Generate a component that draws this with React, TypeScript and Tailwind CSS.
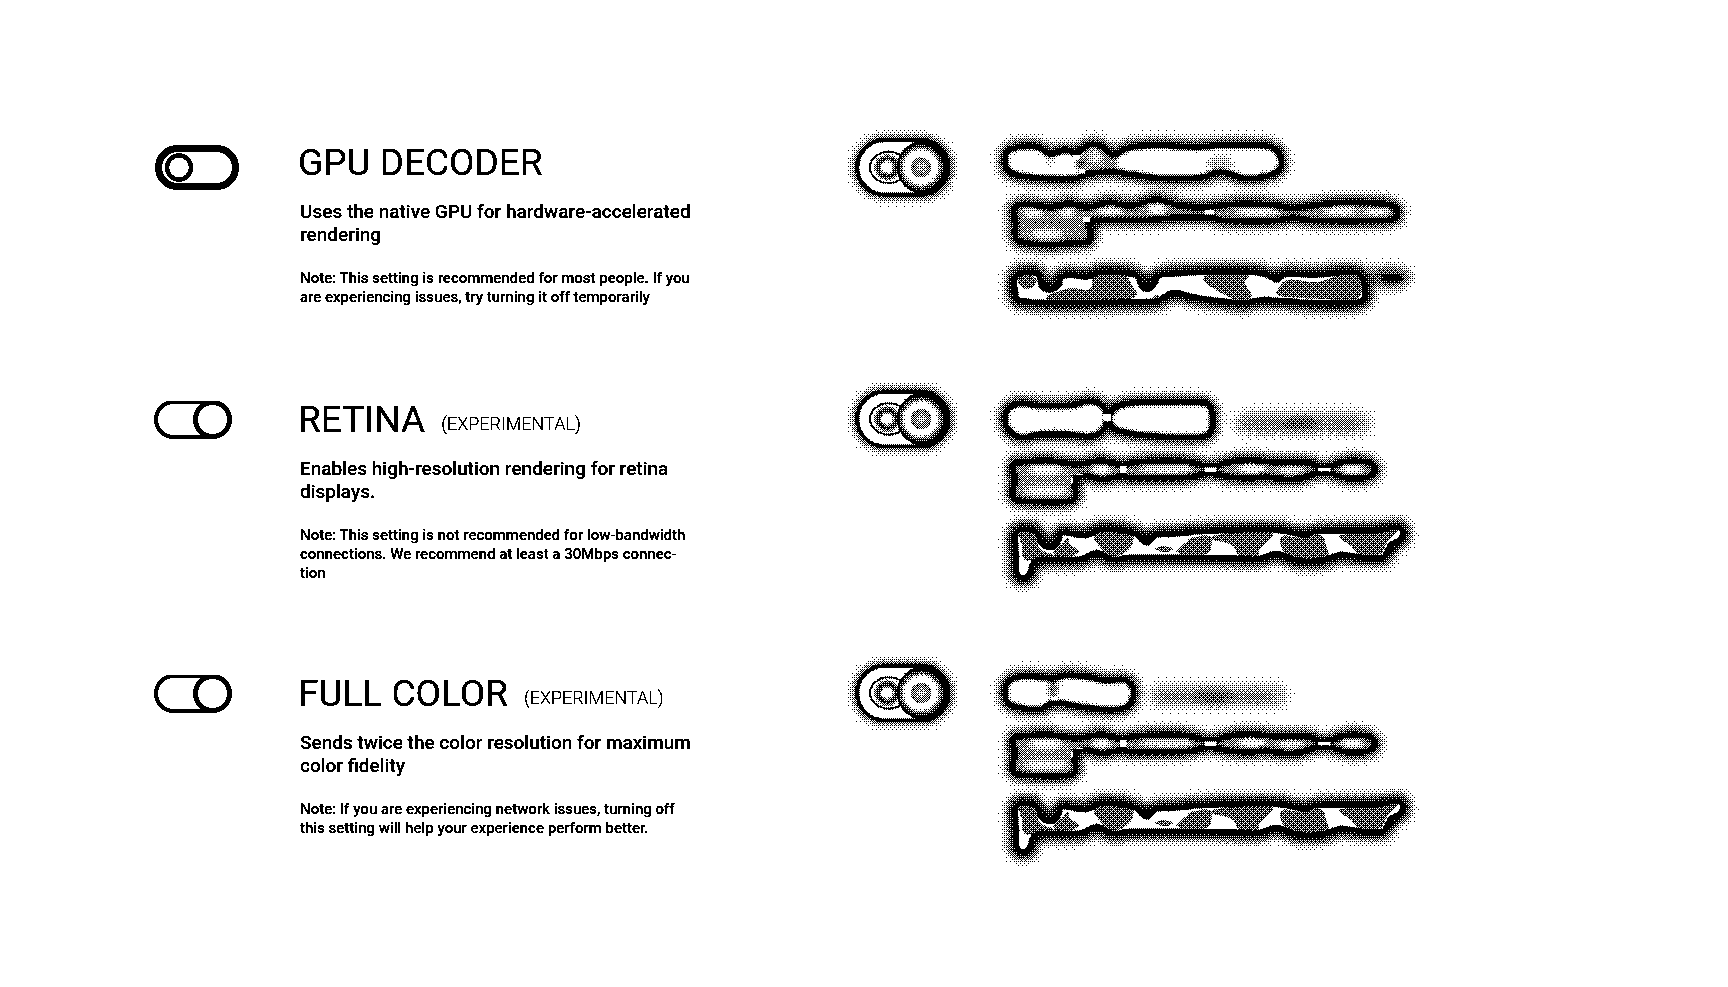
import { useId, useState } from "react";
import type { ReactNode } from "react";

type Pt = [number, number];

/* Ordered 8x8 threshold matrix used for the one-bit rendering. */
const bayer = (x: number, y: number): number => {
  let v = 0;
  for (let bit = 0; bit < 3; bit++) {
    const bx = (x >> bit) & 1;
    const by = (y >> bit) & 1;
    v = v * 4 + ((bx ^ by) * 2 + by);
  }
  return v;
};

const cells = Array.from({ length: 64 }, (_, i) => {
  const x = i % 8;
  const y = Math.floor(i / 8);
  const level = Math.round(((bayer(x, y) + 0.5) / 64) * 255);
  return { x, y, fill: `rgb(${level},${level},${level})` };
});

/* Closed Catmull-Rom curve through the points. */
const smooth = (p: Pt[]): string => {
  const n = p.length;
  let d = `M${p[0][0]} ${p[0][1]}`;
  for (let i = 0; i < n; i++) {
    const a = p[(i + n - 1) % n];
    const b = p[i];
    const c = p[(i + 1) % n];
    const e = p[(i + 2) % n];
    d += `C${b[0] + (c[0] - a[0]) / 6} ${b[1] + (c[1] - a[1]) / 6} ${c[0] - (e[0] - b[0]) / 6} ${c[1] - (e[1] - b[1]) / 6} ${c[0]} ${c[1]}`;
  }
  return d + "Z";
};

function Dithered({ width, height, children }: { width: number; height: number; children: ReactNode }) {
  const id = useId();
  return (
    <svg width={width} height={height} viewBox={`0 0 ${width} ${height}`} aria-hidden="true" className="block shrink-0">
      <defs>
        <pattern id={`${id}m`} width="8" height="8" patternUnits="userSpaceOnUse">
          {cells.map((c) => (
            <rect key={`${c.x}-${c.y}`} x={c.x} y={c.y} width="1" height="1" fill={c.fill} shapeRendering="crispEdges" />
          ))}
        </pattern>
        <filter id={`${id}t`} x="0" y="0" width={width} height={height} filterUnits="userSpaceOnUse" colorInterpolationFilters="sRGB">
          <feComponentTransfer>
            <feFuncR type="discrete" tableValues="0 1" />
            <feFuncG type="discrete" tableValues="0 1" />
            <feFuncB type="discrete" tableValues="0 1" />
          </feComponentTransfer>
        </filter>
      </defs>
      <g filter={`url(#${id}t)`}>
        <rect width={width} height={height} fill="#fff" />
        {children}
        <rect width={width} height={height} fill={`url(#${id}m)`} opacity="0.5" />
      </g>
    </svg>
  );
}

function SharedFilters() {
  return (
    <svg width="0" height="0" aria-hidden="true" className="absolute">
      <defs>
        <filter id="halo" x="-20%" y="-80%" width="140%" height="260%" colorInterpolationFilters="sRGB">
          <feGaussianBlur stdDeviation="13" />
        </filter>
        <filter id="soft" x="-20%" y="-40%" width="140%" height="180%" colorInterpolationFilters="sRGB">
          <feGaussianBlur stdDeviation="5" />
        </filter>
        <filter id="glow" x="-60%" y="-100%" width="220%" height="300%" colorInterpolationFilters="sRGB">
          <feGaussianBlur stdDeviation="8" />
        </filter>
        <filter id="onebit" x="0" y="0" width="100%" height="100%" colorInterpolationFilters="sRGB">
          <feComponentTransfer>
            <feFuncA type="discrete" tableValues="0 1 1" />
          </feComponentTransfer>
        </filter>
      </defs>
    </svg>
  );
}

interface Spot {
  x: number;
  y: number;
  rx: number;
  ry: number;
  fill: string;
}

interface Shape {
  points: Pt[];
  fill: string;
  spots?: Spot[];
  patches?: Pt[][];
  gaps?: Spot[];
}

const spot = (x: number, y: number, rx: number, ry: number, fill: string): Spot => ({ x, y, rx, ry, fill });

function ShapeBody({ shape }: { shape: Shape }) {
  const id = useId();
  const d = smooth(shape.points);
  return (
    <g>
      <clipPath id={id}>
        <path d={d} />
      </clipPath>
      <g clipPath={`url(#${id})`}>
        <path d={d} fill={shape.fill} />
        {shape.spots?.map((s, i) => (
          <ellipse key={i} cx={s.x} cy={s.y} rx={s.rx} ry={s.ry} fill={s.fill} filter="url(#glow)" />
        ))}
        {shape.patches?.map((p, i) => (
          <path key={i} d={smooth(p)} fill="#585858" />
        ))}
        <path d={d} fill="none" stroke="#000" strokeWidth="20" filter="url(#soft)" opacity={shape.patches ? 0 : 0.85} />
      </g>
      <path d={d} fill="none" stroke="#000" strokeWidth="16" strokeLinejoin="round" />
      {shape.gaps?.map((s, i) => (
        <rect key={i} x={s.x - s.rx} y={s.y - s.ry} width={s.rx * 2} height={s.ry * 2} fill={s.fill} />
      ))}
    </g>
  );
}

interface Ghost {
  height: number;
  top: number;
  knobY: number;
  shapes: Shape[];
  smear?: [number, number];
  tail?: boolean;
}

function GhostText({ ghost }: { ghost: Ghost }) {
  return (
    <Dithered width={440} height={ghost.height}>
      <g transform={`scale(0.333333) translate(-450 ${-ghost.top})`}>
        {ghost.smear && (
          <g filter="url(#halo)">
            <rect x={ghost.smear[0]} y={ghost.smear[1] - 38} width="418" height="72" rx="36" fill="#b0b0b0" />
            <ellipse cx={ghost.smear[0] + 90} cy={ghost.smear[1]} rx="66" ry="20" fill="#808080" />
            <ellipse cx={ghost.smear[0] + 200} cy={ghost.smear[1]} rx="66" ry="20" fill="#484848" />
            <ellipse cx={ghost.smear[0] + 325} cy={ghost.smear[1]} rx="56" ry="19" fill="#787878" />
          </g>
        )}
        {ghost.shapes.map((s, i) => (
          <path key={i} d={smooth(s.points)} fill="#000" stroke="#000" strokeWidth={s.patches ? 50 : 38} filter="url(#halo)" />
        ))}
        {ghost.tail && (
          <g>
            <ellipse cx="1645" cy="472" rx="70" ry="36" fill="#000" opacity="0.65" filter="url(#halo)" />
            <ellipse cx="1656" cy="475" rx="34" ry="15" fill="#000" filter="url(#soft)" />
          </g>
        )}
        {ghost.shapes.map((s, i) => (
          <ShapeBody key={i} shape={s} />
        ))}
      </g>
    </Dithered>
  );
}

const shift = (p: Pt[], dy: number): Pt[] => p.map(([x, y]) => [x, y + dy]);

const gpuGhost: Ghost = {
  height: 193,
  top: 30,
  knobY: 148,
  tail: true,
  shapes: [
    {
      fill: "#fff",
      points: [[495, 125], [505, 92], [560, 78], [600, 84], [632, 102], [675, 90], [710, 98], [752, 73], [785, 80], [820, 105], [860, 85], [900, 78], [970, 76], [1070, 82], [1140, 76], [1270, 77], [1310, 92], [1324, 125], [1312, 155], [1270, 170], [1215, 175], [1140, 155], [1085, 172], [970, 175], [870, 163], [820, 155], [745, 160], [700, 176], [600, 174], [530, 165], [502, 148]],
      spots: [spot(765, 118, 42, 38, "#909090"), spot(812, 130, 22, 34, "#808080"), spot(722, 132, 12, 18, "#303030"), spot(1140, 130, 40, 22, "#b8b8b8"), spot(630, 120, 6, 20, "#b0b0b0"), spot(766, 112, 16, 20, "#e8e8e8")],
      gaps: [spot(709, 111, 10, 7, "#fff"), spot(726, 155, 9, 5, "#fff")],
    },
    {
      fill: "#888",
      points: [[522, 265], [560, 252], [630, 262], [690, 250], [740, 262], [810, 247], [870, 258], [950, 238], [1010, 255], [1090, 263], [1120, 260], [1210, 250], [1300, 255], [1360, 265], [1430, 255], [1500, 248], [1620, 250], [1662, 260], [1673, 278], [1662, 296], [1610, 302], [1430, 302], [1360, 294], [1300, 302], [1150, 301], [1110, 292], [1020, 292], [950, 298], [870, 300], [765, 300], [746, 312], [753, 345], [745, 366], [710, 368], [630, 374], [540, 365], [525, 340], [527, 310]],
      spots: [spot(580, 278, 30, 14, "#f4f4f4"), spot(680, 278, 28, 14, "#f4f4f4"), spot(620, 342, 50, 14, "#f4f4f4"), spot(810, 275, 40, 14, "#f4f4f4"), spot(950, 266, 28, 20, "#fff"), spot(1250, 276, 66, 14, "#f0f0f0"), spot(1500, 274, 50, 14, "#f4f4f4"), spot(1610, 276, 36, 14, "#f0f0f0"), spot(630, 308, 90, 5, "#606060")],
      gaps: [spot(740, 298, 10, 8, "#fff"), spot(1108, 277, 14, 7, "#fff")],
    },
    {
      fill: "#fff",
      points: [[527, 470], [560, 458], [595, 465], [605, 500], [630, 510], [658, 495], [665, 470], [700, 466], [740, 472], [780, 458], [840, 458], [890, 468], [905, 500], [925, 508], [945, 490], [955, 468], [1000, 462], [1170, 455], [1270, 462], [1310, 480], [1340, 463], [1430, 466], [1520, 457], [1560, 465], [1573, 510], [1558, 545], [1430, 548], [1270, 538], [1210, 548], [1070, 532], [1000, 517], [950, 542], [870, 545], [650, 548], [540, 540], [527, 520]],
      patches: [
        [[534, 475], [560, 462], [588, 475], [580, 500], [550, 505]],
        [[620, 530], [650, 515], [700, 505], [750, 507], [765, 470], [850, 465], [878, 500], [890, 522], [840, 545], [650, 546]],
        [[1090, 475], [1130, 460], [1220, 465], [1215, 490], [1235, 530], [1190, 540], [1120, 505]],
        [[1315, 505], [1350, 478], [1430, 486], [1510, 462], [1558, 475], [1560, 530], [1520, 540], [1400, 535], [1320, 528]],
        [[940, 528], [952, 525], [955, 532], [942, 534]],
      ],
    },
  ],
};

const subPoints: Pt[] = [[520, 268], [570, 260], [620, 256], [700, 268], [740, 264], [785, 256], [835, 270], [855, 272], [875, 263], [970, 257], [1040, 259], [1095, 273], [1130, 273], [1170, 260], [1230, 255], [1310, 262], [1400, 262], [1440, 276], [1470, 275], [1520, 258], [1585, 262], [1604, 284], [1585, 306], [1520, 309], [1470, 294], [1440, 292], [1400, 304], [1350, 314], [1280, 305], [1230, 309], [1160, 305], [1125, 295], [1095, 295], [1040, 307], [870, 308], [850, 300], [790, 313], [740, 302], [712, 305], [702, 330], [708, 358], [690, 378], [620, 381], [530, 375], [518, 350], [524, 315]];

const notePoints: Pt[] = [[527, 475], [560, 462], [592, 475], [605, 508], [635, 518], [655, 500], [665, 474], [700, 478], [740, 482], [780, 465], [830, 465], [890, 478], [905, 496], [925, 503], [950, 480], [1000, 478], [1090, 470], [1300, 465], [1390, 480], [1430, 470], [1520, 468], [1600, 468], [1670, 458], [1688, 470], [1680, 492], [1650, 512], [1630, 545], [1580, 548], [1500, 538], [1450, 555], [1370, 555], [1310, 535], [1250, 552], [1150, 548], [890, 546], [820, 553], [770, 532], [720, 552], [620, 552], [582, 560], [567, 598], [545, 608], [530, 592], [530, 540]];

const notePatches: Pt[][] = [
  [[536, 470], [560, 465], [588, 480], [600, 522], [640, 540], [600, 548], [555, 555], [545, 510]],
  [[640, 530], [665, 508], [685, 488], [690, 510], [718, 528], [690, 545], [650, 545]],
  [[762, 490], [770, 470], [872, 478], [875, 510], [842, 540], [800, 540], [775, 510]],
  [[1010, 530], [1040, 500], [1055, 488], [1110, 484], [1108, 530], [1060, 542]],
  [[1110, 490], [1170, 474], [1290, 472], [1290, 490], [1262, 520], [1250, 545], [1200, 545], [1175, 510]],
  [[1324, 485], [1380, 488], [1440, 480], [1460, 515], [1460, 545], [1400, 555], [1335, 535]],
  [[1500, 482], [1600, 468], [1670, 466], [1645, 495], [1620, 538], [1560, 538], [1530, 510]],
  [[945, 522], [970, 514], [1000, 522], [975, 532]],
];

const lowerShapes = (dy: number): Shape[] => [
  {
    fill: "#888",
    points: shift(subPoints, dy),
    spots: [spot(620, 284 + dy, 56, 15, "#f4f4f4"), spot(785, 284 + dy, 28, 15, "#fff"), spot(620, 348 + dy, 70, 14, "#f0f0f0"), spot(980, 284 + dy, 80, 13, "#e8e8e8"), spot(1235, 282 + dy, 40, 15, "#fff"), spot(1350, 284 + dy, 36, 12, "#e8e8e8"), spot(1535, 284 + dy, 32, 15, "#fff")],
    gaps: [spot(850, 284 + dy, 10, 10, "#fff"), spot(1112, 284 + dy, 18, 7, "#fff"), spot(1453, 284 + dy, 19, 5, "#fff"), spot(696, 317 + dy, 3, 9, "#fff"), spot(718, 298 + dy, 9, 2, "#fff")],
  },
  {
    fill: "#fff",
    points: shift(notePoints, dy),
    patches: notePatches.map((p) => shift(p, dy)),
  },
];

const retinaGhost: Ghost = {
  height: 210,
  top: 36,
  knobY: 132,
  smear: [1180, 147],
  shapes: [
    {
      fill: "#fff",
      points: [[495, 130], [508, 98], [545, 85], [600, 92], [700, 90], [745, 78], [785, 90], [800, 118], [800, 142], [785, 170], [745, 185], [690, 178], [600, 178], [545, 187], [508, 168]],
    },
    {
      fill: "#fff",
      points: [[808, 130], [825, 98], [870, 85], [920, 82], [1070, 82], [1108, 92], [1118, 130], [1112, 170], [1085, 185], [1000, 186], [890, 178], [830, 165], [812, 148]],
      gaps: [spot(802, 128, 11, 11, "#fff")],
    },
    ...lowerShapes(0),
  ],
};

const colorGhost: Ghost = {
  height: 210,
  top: 33,
  knobY: 132,
  smear: [925, 140],
  shapes: [
    {
      fill: "#fff",
      points: [[495, 128], [508, 92], [560, 78], [635, 85], [680, 75], [740, 80], [800, 92], [850, 88], [877, 110], [879, 145], [860, 170], [810, 180], [720, 170], [645, 158], [600, 178], [550, 175], [508, 162]],
      spots: [spot(640, 115, 14, 34, "#606060")],
      gaps: [spot(642, 146, 10, 5, "#fff")],
    },
    ...lowerShapes(-3),
  ],
};

function GhostSwitch({ label, y }: { label: string; y: number }) {
  const [on, setOn] = useState(true);
  return (
    <label className="-mt-3 block w-[120px] shrink-0 cursor-pointer">
      <input type="checkbox" role="switch" aria-label={label} checked={on} onChange={(e) => setOn(e.target.checked)} className="sr-only" />
      <Dithered width={120} height={96}>
        <g transform={`scale(0.333333) translate(0 ${y})`}>
          <rect x="52" y="-81" width="274" height="162" rx="81" fill="#000" stroke="#000" strokeWidth="22" filter="url(#halo)" />
          <rect x="52" y="-82" width="273" height="164" rx="82" fill="#fff" stroke="#000" strokeWidth="12" />
          <ellipse cx="146" cy="0" rx="56" ry="47" fill="#fff" stroke="#000" strokeWidth="6" />
          <circle cx="142" cy="0" r="28" fill="#fff" stroke="#202020" strokeWidth="17" filter="url(#soft)" />
          <circle cx="139" cy="0" r="15" fill="#fff" />
          <circle cx="250" cy="0" r="80" fill="#000" />
          <circle cx="243" cy="0" r="67" fill="#404040" />
          <circle cx="243" cy="0" r="56" fill="#fff" filter="url(#soft)" />
          <circle cx="243" cy="0" r="47" fill="#fff" />
          <circle cx="243" cy="0" r="31" fill="#787878" />
          <circle cx="243" cy="0" r="14" fill="#b8b8b8" filter="url(#soft)" />
        </g>
      </Dithered>
    </label>
  );
}

function Switch({ id, initial }: { id: string; initial: boolean }) {
  const [on, setOn] = useState(initial);
  return (
    <label className="block w-[144px] shrink-0 cursor-pointer pt-[14px]">
      <input id={id} type="checkbox" role="switch" aria-labelledby={`${id}-title`} checked={on} onChange={(e) => setOn(e.target.checked)} className="sr-only" />
      {on ? (
        <svg width="86" height="46" viewBox="0 0 86 46" shapeRendering="crispEdges" aria-hidden="true" className="block">
          <rect x="2" y="1" width="74" height="35" rx="17.5" fill="none" stroke="#000" strokeWidth="4" />
          <circle cx="58.5" cy="18.5" r="17" fill="#fff" stroke="#000" strokeWidth="5" />
        </svg>
      ) : (
        <svg width="86" height="46" viewBox="0 0 86 46" shapeRendering="crispEdges" aria-hidden="true" className="block">
          <rect x="4.5" y="4.5" width="77" height="38" rx="19" fill="none" stroke="#000" strokeWidth="7" />
          <circle cx="25" cy="23.5" r="12" fill="#fff" stroke="#000" strokeWidth="4.5" />
        </svg>
      )}
    </label>
  );
}

interface Setting {
  id: string;
  title: string;
  experimental: boolean;
  on: boolean;
  summary: string[];
  note: string[];
  ghost: Ghost;
}

const settings: Setting[] = [
  {
    id: "gpu",
    title: "GPU DECODER",
    experimental: false,
    on: false,
    summary: ["Uses the native GPU for hardware-accelerated", "rendering"],
    note: ["Note: This setting is recommended for most people. If you", "are experiencing issues, try turning it off temporarily"],
    ghost: gpuGhost,
  },
  {
    id: "retina",
    title: "RETINA",
    experimental: true,
    on: true,
    summary: ["Enables high-resolution rendering for retina", "displays."],
    note: ["Note: This setting is not recommended for low-bandwidth", "connections. We recommend at least a 30Mbps connec-", "tion"],
    ghost: retinaGhost,
  },
  {
    id: "color",
    title: "FULL COLOR",
    experimental: true,
    on: true,
    summary: ["Sends twice the color resolution for maximum", "color fidelity"],
    note: ["Note: If you are experiencing network issues, turning off", "this setting will help your experience perform better."],
    ghost: colorGhost,
  },
];

function SettingRow({ setting }: { setting: Setting }) {
  return (
    <section className="grid grid-cols-[686px_1fr] items-start">
      <div className="flex">
        <Switch id={setting.id} initial={setting.on} />
        <div className="pt-[11px] whitespace-nowrap [filter:url(#onebit)]">
          <div className="flex items-end gap-4">
            <h2 id={`${setting.id}-title`} className="text-[37px] leading-[44px] font-normal">
              {setting.title}
            </h2>
            {setting.experimental && <span className="pb-1.5 text-[18px] leading-6 font-light">(EXPERIMENTAL)</span>}
          </div>
          <div className="pl-0.5">
            <p className="mt-[15px] text-[19px] leading-[23px] font-medium">
              {setting.summary.map((line) => (
                <span key={line} className="block">
                  {line}
                </span>
              ))}
            </p>
            <p className="mt-[23px] text-[15px] leading-[19px] font-medium">
              {setting.note.map((line) => (
                <span key={line} className="block">
                  {line}
                </span>
              ))}
            </p>
          </div>
        </div>
      </div>
      <div className="flex items-start gap-[30px]">
        <GhostSwitch label={setting.title} y={setting.ghost.knobY} />
        <GhostText ghost={setting.ghost} />
      </div>
    </section>
  );
}

export default function App() {
  return (
    <main className="min-h-screen bg-white pt-[130px] pb-16 pl-[154px] font-['Roboto',sans-serif] text-black">
      <SharedFilters />
      <div className="flex flex-col gap-16">
        {settings.map((s) => (
          <SettingRow key={s.id} setting={s} />
        ))}
      </div>
    </main>
  );
}
